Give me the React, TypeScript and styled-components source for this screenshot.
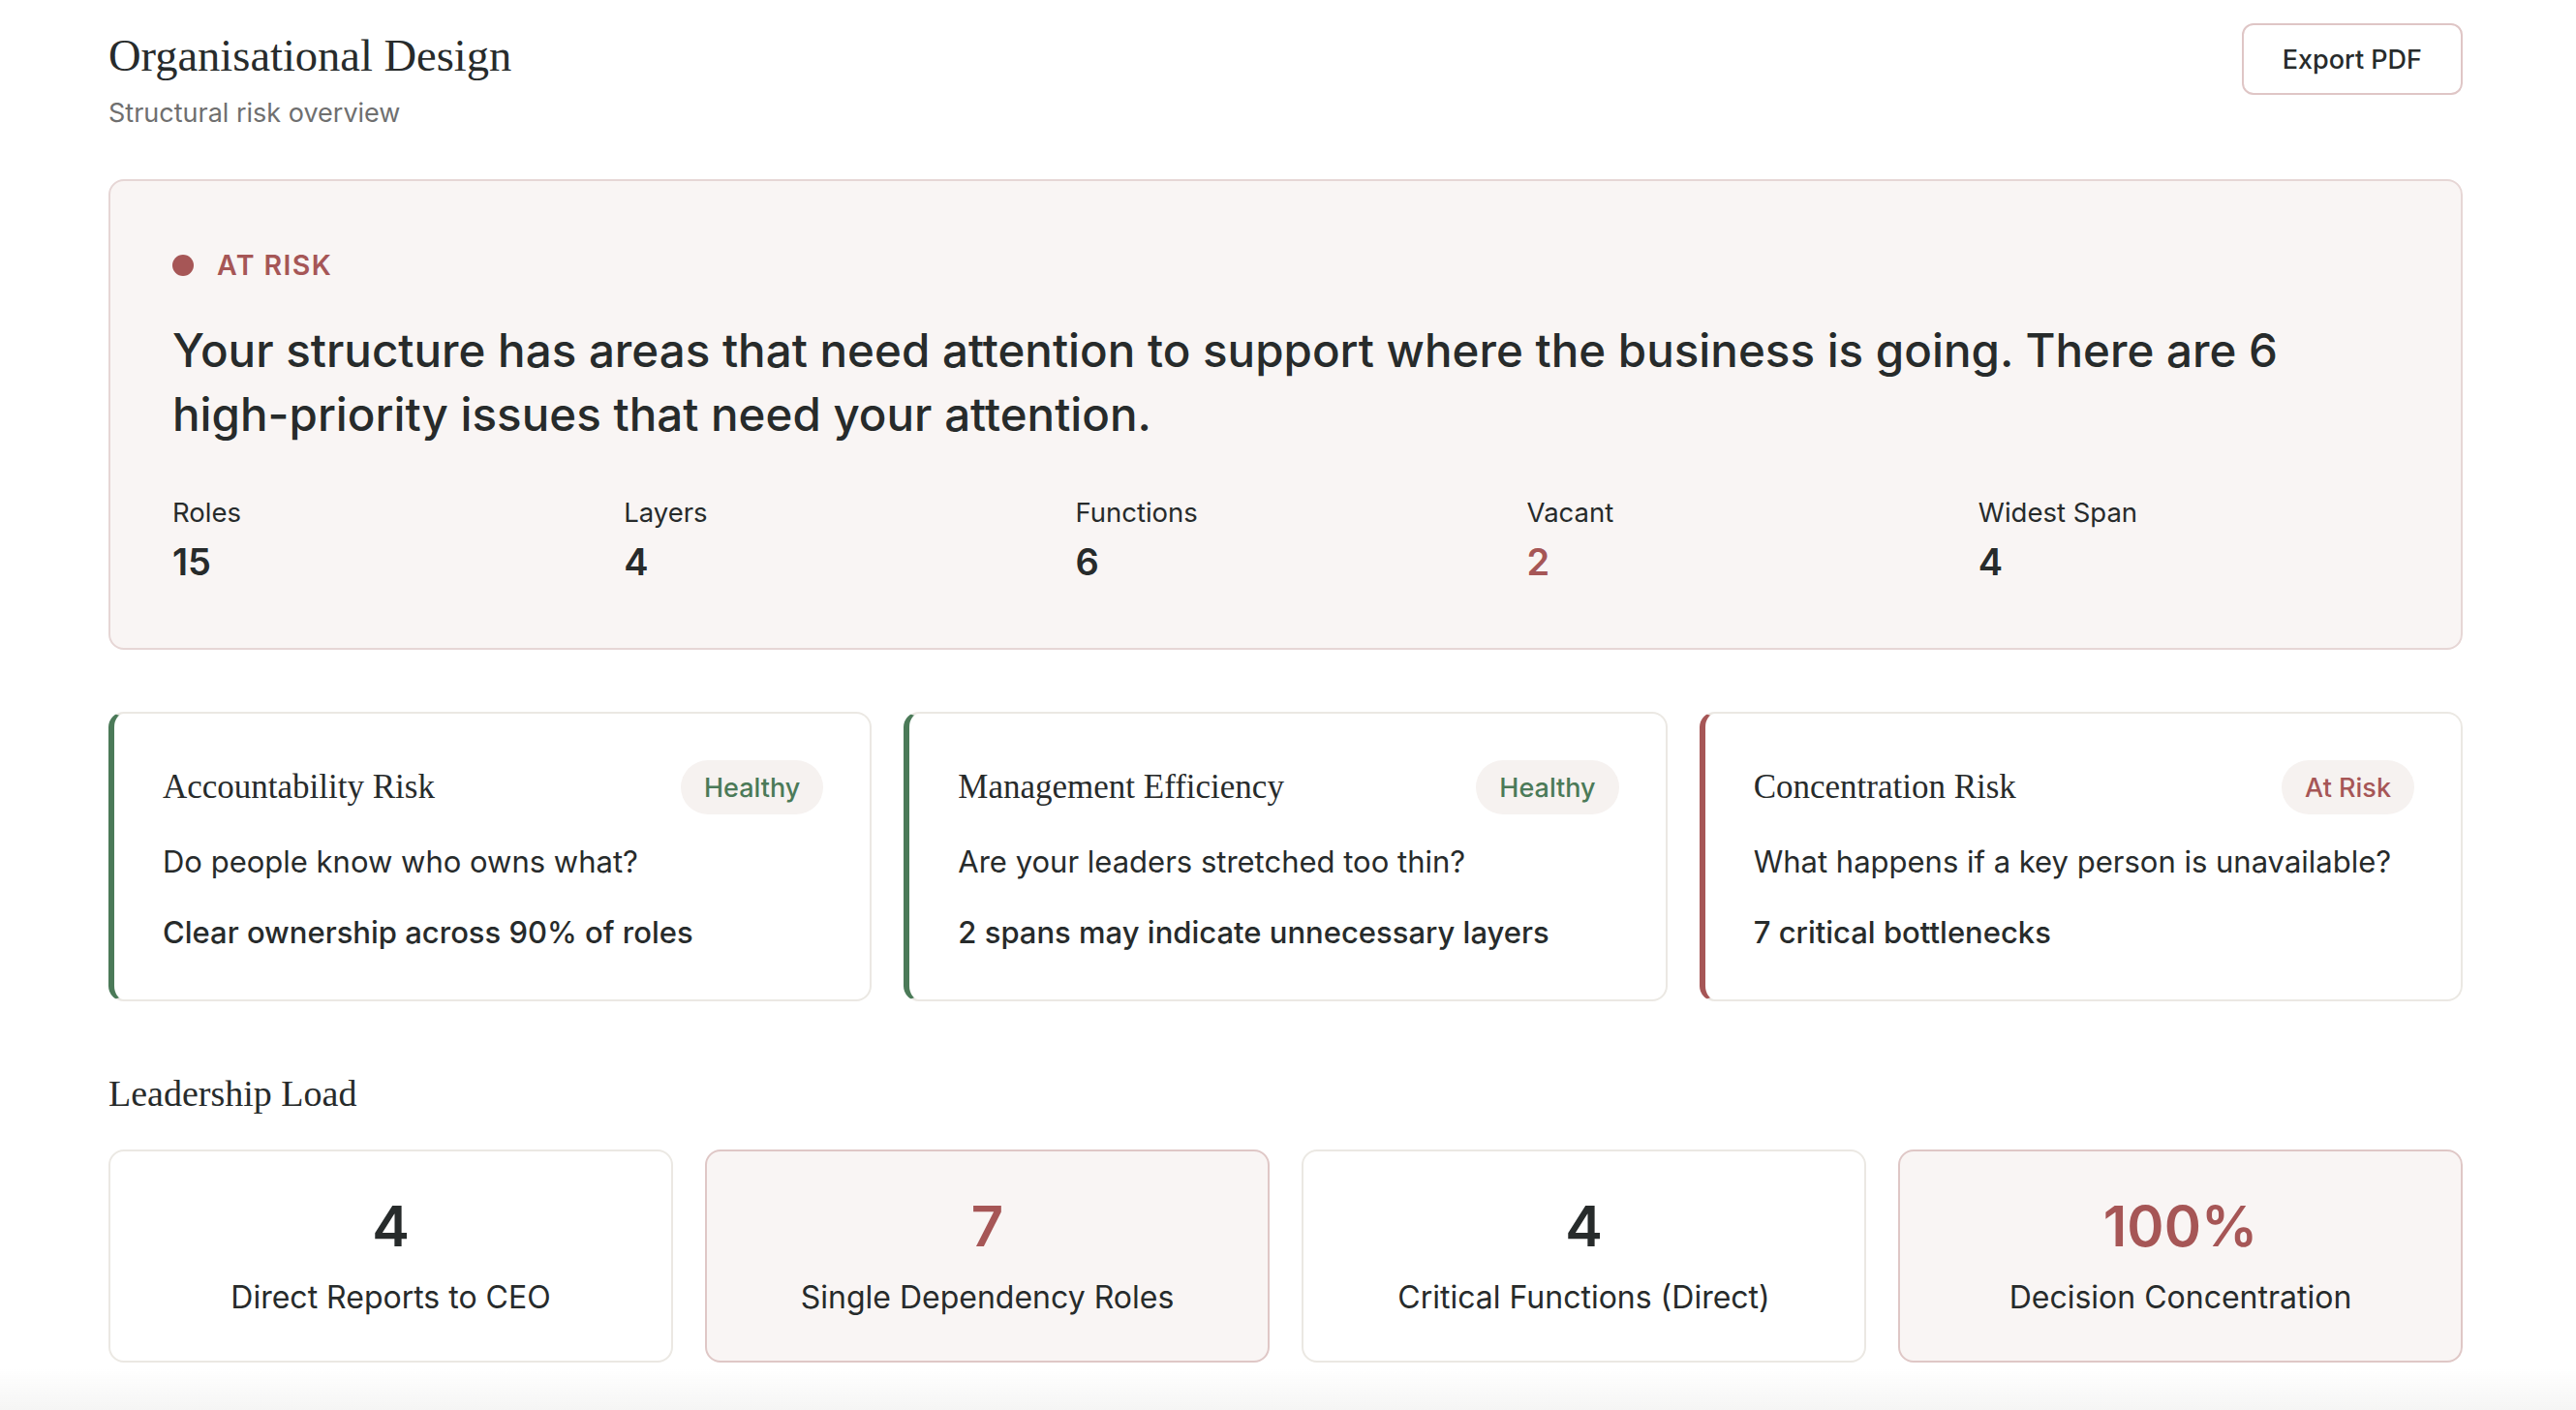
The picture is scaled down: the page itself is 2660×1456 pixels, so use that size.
import React from "react";
import styled, { createGlobalStyle } from "styled-components";

const GlobalStyle = createGlobalStyle`
  html, body {
    margin: 0;
    padding: 0;
    background: #ffffff;
  }
  body {
    font-family: "Inter", "Liberation Sans", sans-serif;
    color: #272b2b;
    -webkit-font-smoothing: antialiased;
  }
  * {
    box-sizing: border-box;
  }
`;

const colors = {
  text: "#272b2b",
  muted: "#6f6f6f",
  red: "#a65656",
  green: "#4b7a58",
  blush: "#f9f5f4",
  blushBorder: "#e6d6d5",
  line: "#ebe8e3",
  pill: "#f6f2f0",
};

const Page = styled.main`
  padding: 24px 117px 60px 112px;
`;

const Header = styled.header`
  display: flex;
  justify-content: space-between;
  align-items: flex-start;
  margin-bottom: 50px;
`;

const TitleBlock = styled.div`
  display: flex;
  flex-direction: column;
  gap: 13px;
`;

const PageTitle = styled.h1`
  margin: 6px 0 0;
  font-family: "Liberation Serif", serif;
  font-weight: 400;
  font-size: 46.5px;
  line-height: 56px;
  color: ${colors.text};
`;

const Subtitle = styled.p`
  margin: 0;
  font-size: 27px;
  line-height: 36px;
  color: ${colors.muted};
`;

const ExportButton = styled.button`
  height: 74px;
  padding: 0 40px;
  border: 2px solid #dfc6c6;
  border-radius: 12px;
  background: #ffffff;
  font-family: "Inter", sans-serif;
  font-size: 27px;
  font-weight: 500;
  color: ${colors.text};
  cursor: pointer;
`;

const Hero = styled.section`
  background: ${colors.blush};
  border: 2px solid ${colors.blushBorder};
  border-radius: 16px;
  padding: 70px 64px 66px;
`;

const Status = styled.div`
  display: flex;
  align-items: center;
  gap: 24px;
  font-size: 28.5px;
  line-height: 34px;
  font-weight: 600;
  letter-spacing: 0.05em;
  color: ${colors.red};
  text-transform: uppercase;
`;

const Dot = styled.span`
  width: 22px;
  height: 22px;
  border-radius: 50%;
  background: ${colors.red};
`;

const Headline = styled.p`
  margin: 38px 0 0;
  font-size: 47.5px;
  line-height: 66px;
  font-weight: 500;
  color: ${colors.text};
`;

const Stats = styled.div`
  display: grid;
  grid-template-columns: repeat(5, 1fr);
  gap: 32px;
  margin-top: 51px;
`;

const Stat = styled.div`
  display: flex;
  flex-direction: column;
  gap: 11px;
`;

const StatLabel = styled.span`
  font-size: 27.5px;
  line-height: 34px;
  color: ${colors.text};
`;

const StatValue = styled.span<{ $alert?: boolean }>`
  font-size: 38px;
  line-height: 46px;
  font-weight: 600;
  color: ${({ $alert }) => ($alert ? colors.red : colors.text)};
`;

const DimensionGrid = styled.div`
  display: grid;
  grid-template-columns: repeat(3, 1fr);
  gap: 33px;
  margin-top: 64px;
`;

const DimensionCard = styled.article<{ $tone: "good" | "bad" }>`
  background: #ffffff;
  border: 2px solid ${colors.line};
  border-left: 6px solid
    ${({ $tone }) => ($tone === "good" ? colors.green : colors.red)};
  border-radius: 16px;
  padding: 48px 48px 48px 50px;
  display: flex;
  flex-direction: column;
`;

const CardHead = styled.div`
  display: flex;
  justify-content: space-between;
  align-items: center;
`;

const CardTitle = styled.h3`
  margin: 0;
  font-family: "Liberation Serif", serif;
  font-weight: 400;
  font-size: 35px;
  color: ${colors.text};
`;

const Badge = styled.span<{ $tone: "good" | "bad" }>`
  display: inline-flex;
  align-items: center;
  height: 56px;
  padding: 0 24px;
  border-radius: 28px;
  background: ${colors.pill};
  font-size: 27px;
  font-weight: 500;
  color: ${({ $tone }) => ($tone === "good" ? colors.green : colors.red)};
`;

const Question = styled.p`
  margin: 28px 0 0;
  font-size: 31px;
  line-height: 42px;
  color: ${colors.text};
`;

const Finding = styled.p`
  margin: 31px 0 0;
  font-size: 31px;
  line-height: 42px;
  font-weight: 500;
  color: ${colors.text};
`;

const SectionTitle = styled.h2`
  margin: 72px 0 35px;
  font-family: "Liberation Serif", serif;
  font-weight: 400;
  font-size: 38px;
  line-height: 46px;
  color: ${colors.text};
`;

const LoadGrid = styled.div`
  display: grid;
  grid-template-columns: repeat(4, 1fr);
  gap: 33px;
`;

const LoadCard = styled.div<{ $alert?: boolean }>`
  height: 220px;
  border-radius: 16px;
  border: 2px solid ${({ $alert }) => ($alert ? "#dfc7c6" : colors.line)};
  background: ${({ $alert }) => ($alert ? colors.blush : "#ffffff")};
  display: flex;
  flex-direction: column;
  align-items: center;
  justify-content: center;
  gap: 20px;
  padding-bottom: 2px;
`;

const LoadValue = styled.span<{ $alert?: boolean }>`
  font-size: 58px;
  line-height: 68px;
  font-weight: 600;
  color: ${({ $alert }) => ($alert ? colors.red : colors.text)};
`;

const LoadLabel = styled.span`
  font-size: 32px;
  line-height: 40px;
  color: ${colors.text};
`;

const BottomFade = styled.div`
  position: fixed;
  left: 0;
  right: 0;
  bottom: 0;
  height: 42px;
  background: linear-gradient(
    to bottom,
    rgba(244, 244, 243, 0),
    rgba(244, 244, 243, 0.9)
  );
  pointer-events: none;
`;

const stats = [
  { label: "Roles", value: "15" },
  { label: "Layers", value: "4" },
  { label: "Functions", value: "6" },
  { label: "Vacant", value: "2", alert: true },
  { label: "Widest Span", value: "4" },
];

const dimensions: {
  title: string;
  status: string;
  tone: "good" | "bad";
  question: string;
  finding: string;
}[] = [
  {
    title: "Accountability Risk",
    status: "Healthy",
    tone: "good",
    question: "Do people know who owns what?",
    finding: "Clear ownership across 90% of roles",
  },
  {
    title: "Management Efficiency",
    status: "Healthy",
    tone: "good",
    question: "Are your leaders stretched too thin?",
    finding: "2 spans may indicate unnecessary layers",
  },
  {
    title: "Concentration Risk",
    status: "At Risk",
    tone: "bad",
    question: "What happens if a key person is unavailable?",
    finding: "7 critical bottlenecks",
  },
];

const load = [
  { value: "4", label: "Direct Reports to CEO" },
  { value: "7", label: "Single Dependency Roles", alert: true },
  { value: "4", label: "Critical Functions (Direct)" },
  { value: "100%", label: "Decision Concentration", alert: true },
];

export default function App() {
  return (
    <>
      <GlobalStyle />
      <Page>
        <Header>
          <TitleBlock>
            <PageTitle>Organisational Design</PageTitle>
            <Subtitle>Structural risk overview</Subtitle>
          </TitleBlock>
          <ExportButton>Export PDF</ExportButton>
        </Header>

        <Hero>
          <Status>
            <Dot />
            At Risk
          </Status>
          <Headline>
            Your structure has areas that need attention to support where the
            business is going. There are 6 high-priority issues that need your
            attention.
          </Headline>
          <Stats>
            {stats.map((s) => (
              <Stat key={s.label}>
                <StatLabel>{s.label}</StatLabel>
                <StatValue $alert={s.alert}>{s.value}</StatValue>
              </Stat>
            ))}
          </Stats>
        </Hero>

        <DimensionGrid>
          {dimensions.map((d) => (
            <DimensionCard key={d.title} $tone={d.tone}>
              <CardHead>
                <CardTitle>{d.title}</CardTitle>
                <Badge $tone={d.tone}>{d.status}</Badge>
              </CardHead>
              <Question>{d.question}</Question>
              <Finding>{d.finding}</Finding>
            </DimensionCard>
          ))}
        </DimensionGrid>

        <SectionTitle>Leadership Load</SectionTitle>
        <LoadGrid>
          {load.map((l) => (
            <LoadCard key={l.label} $alert={l.alert}>
              <LoadValue $alert={l.alert}>{l.value}</LoadValue>
              <LoadLabel>{l.label}</LoadLabel>
            </LoadCard>
          ))}
        </LoadGrid>
      </Page>
      <BottomFade />
    </>
  );
}
